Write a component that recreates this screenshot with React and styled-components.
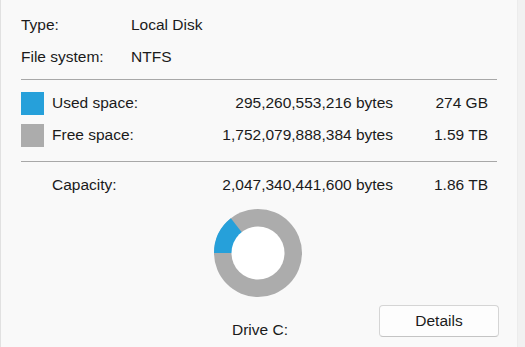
import React from 'react'
import styled, { createGlobalStyle } from 'styled-components'

const Global = createGlobalStyle`
  html, body {
    margin: 0;
    padding: 0;
    background: #f0f0f0;
  }
  body {
    font-family: "Liberation Sans", Arial, sans-serif;
    font-size: 15.5px;
    color: #1b1b1b;
  }
`

const Page = styled.div`
  display: flex;
  height: 347px;
  overflow: hidden;
`

const Panel = styled.div`
  width: 517px;
  flex: 0 0 auto;
  box-sizing: border-box;
  background: #f9f9f9;
  border-left: 1px solid #e1e1e1;
  padding: 9px 20px 0 20px;
  display: flex;
  flex-direction: column;
`

const Strip = styled.div`
  flex: 1;
  background: #f1f1f1;
  border-left: 1px solid #ececec;
`

const InfoRow = styled.div`
  display: grid;
  grid-template-columns: 110px 1fr;
  height: 32px;
  align-items: center;
  line-height: 18px;
`

const Divider = styled.hr`
  border: 0;
  height: 1px;
  background: #a8a8a8;
  margin: ${p => p.$top}px 0 7px;
  width: 476px;
`

const SpaceRow = styled.div`
  display: grid;
  grid-template-columns: 31px 1fr auto 95px;
  padding-right: 9px;
  height: 32px;
  align-items: center;
  line-height: 18px;
`

const Swatch = styled.span`
  display: block;
  width: 23px;
  height: 23px;
  background: ${p => p.$color || 'transparent'};
`

const Right = styled.span`
  text-align: right;
`

const Chart = styled.div`
  display: flex;
  justify-content: center;
  margin-top: 8px;
  padding-right: 2px;
`

const Footer = styled.div`
  display: grid;
  grid-template-columns: 1fr auto 1fr;
  align-items: end;
  margin-top: 8px;
  margin-right: -2px;
`

const DriveLabel = styled.span`
  grid-column: 2;
  line-height: 18px;
  margin-bottom: -1px;
`

const Button = styled.button`
  grid-column: 3;
  justify-self: end;
  width: 120px;
  height: 32px;
  margin-bottom: 1px;
  background: #fdfdfd;
  border: 1px solid #d5d5d5;
  border-bottom-color: #c4c4c4;
  border-radius: 4px;
  font-family: inherit;
  font-size: 15.5px;
  color: #1b1b1b;
`

const USED = 295260553216
const TOTAL = 2047340441600

function Donut({ used, total }) {
  const r = 44
  const start = 270
  const end = start + (used / total) * 360
  const pt = deg => {
    const a = (deg * Math.PI) / 180
    return [r + r * Math.sin(a), r - r * Math.cos(a)]
  }
  const [x1, y1] = pt(start)
  const [x2, y2] = pt(end)
  return (
    <svg width="88" height="88" viewBox="0 0 88 88">
      <circle cx="44" cy="44" r="44" fill="#acacac" />
      <path d={`M44 44 L${x1} ${y1} A44 44 0 0 1 ${x2} ${y2} Z`} fill="#26a0da" />
      <circle cx="44" cy="44" r="26.5" fill="#ffffff" />
    </svg>
  )
}

export default function App() {
  return (
    <Page>
      <Global />
      <Panel>
        <InfoRow><span>Type:</span><span>Local Disk</span></InfoRow>
        <InfoRow><span>File system:</span><span>NTFS</span></InfoRow>
        <Divider $top={6} />
        <SpaceRow>
          <Swatch $color="#26a0da" />
          <span>Used space:</span>
          <Right>295,260,553,216 bytes</Right>
          <Right>274 GB</Right>
        </SpaceRow>
        <SpaceRow>
          <Swatch $color="#acacac" />
          <span>Free space:</span>
          <Right>1,752,079,888,384 bytes</Right>
          <Right>1.59 TB</Right>
        </SpaceRow>
        <Divider $top={10} />
        <SpaceRow>
          <Swatch />
          <span>Capacity:</span>
          <Right>2,047,340,441,600 bytes</Right>
          <Right>1.86 TB</Right>
        </SpaceRow>
        <Chart>
          <Donut used={USED} total={TOTAL} />
        </Chart>
        <Footer>
          <DriveLabel>Drive C:</DriveLabel>
          <Button>Details</Button>
        </Footer>
      </Panel>
      <Strip />
    </Page>
  )
}
